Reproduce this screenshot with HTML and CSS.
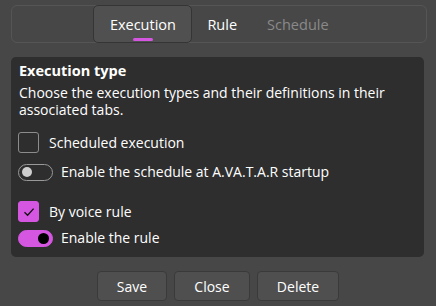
FILE: index.html
```html
<!DOCTYPE html>
<html>
<head>
<meta charset="utf-8">
<link rel="stylesheet" href="styles.css">
</head>
<body>
<div class="tabs">
  <div class="tab selected">Execution<span class="indicator"></span></div>
  <div class="tab">Rule</div>
  <div class="tab disabled">Schedule</div>
</div>
<div class="panel">
  <div class="title">Execution type</div>
  <div class="desc">Choose the execution types and their definitions in their associated tabs.</div>
  <div class="group">
    <div class="row"><span class="check"></span><span>Scheduled execution</span></div>
    <div class="row tight"><span class="toggle"><span class="knob"></span></span><span>Enable the schedule at A.VA.T.A.R startup</span></div>
  </div>
  <div class="group second">
    <div class="row"><span class="check on"><svg width="14" height="14" viewBox="0 0 14 14"><path d="M2.5 7.2 L5.6 10.2 L11.6 3.6" fill="none" stroke="#111" stroke-width="1.3"/></svg></span><span>By voice rule</span></div>
    <div class="row tight"><span class="toggle on"><span class="knob"></span></span><span>Enable the rule</span></div>
  </div>
</div>
<div class="buttons">
  <button class="btn save">Save</button>
  <button class="btn close">Close</button>
  <button class="btn delete">Delete</button>
</div>
</body>
</html>
```
FILE: styles.css
```css
html, body {
  margin: 0;
  padding: 0;
  background: #474747;
  width: 436px;
  height: 306px;
  overflow: hidden;
}
body {
  font-family: "Open Sans", "Noto Sans", sans-serif;
  color: #ffffff;
  font-size: 14px;
  padding-top: 5px;
  box-sizing: border-box;
}
.tabs {
  margin: 0 9px 0 11px;
  height: 38px;
  border: 1px solid #555555;
  border-radius: 6px;
  box-sizing: border-box;
  display: flex;
  justify-content: center;
  align-items: stretch;
  font-size: 14.5px;
}
.tab {
  position: relative;
  display: flex;
  align-items: center;
  padding: 0 15px;
  margin-top: -1px;
  margin-bottom: -1px;
}
.tab.selected {
  width: 99px;
  box-sizing: border-box;
  justify-content: center;
  background: #505050;
  border: 1px solid #353535;
  border-radius: 5px;
  margin-left: -1px;
}
.tab.disabled {
  color: #8a8a8a;
}
.indicator {
  position: absolute;
  left: 39px;
  bottom: 1px;
  width: 20px;
  height: 3px;
  border-radius: 2px;
  background: #d456e1;
}
.panel {
  margin: 14px 12px 0 11px;
  height: 200px;
  background: #2e2e2e;
  border-radius: 5px;
  padding: 4px 8px 0 8px;
  box-sizing: border-box;
}
.title {
  font-weight: bold;
  font-size: 14.5px;
  line-height: 20px;
}
.desc {
  margin-top: 3px;
  line-height: 17px;
  padding-right: 10px;
}
.group {
  margin-top: 14px;
  display: flex;
  flex-direction: column;
  gap: 9px;
}
.group.second {
  margin-top: 19px;
  gap: 6px;
}
.row {
  display: flex;
  align-items: center;
  gap: 10px;
  line-height: 20px;
}
.row.tight {
  gap: 8px;
}
.check {
  width: 21px;
  height: 21px;
  box-sizing: border-box;
  border: 1px solid #8c8c8c;
  border-radius: 3px;
  margin-left: -1px;
  display: flex;
  align-items: center;
  justify-content: center;
}
.check.on {
  background: #d456e1;
  border-color: #d456e1;
}
.toggle {
  width: 35px;
  height: 17px;
  box-sizing: border-box;
  border: 1px solid #999999;
  border-radius: 9px;
  margin-left: -1px;
  display: flex;
  align-items: center;
  padding: 0 3px;
}
.toggle .knob {
  width: 10px;
  height: 10px;
  border-radius: 50%;
  background: #cfcfcf;
}
.toggle.on {
  background: #d456e1;
  border-color: #d456e1;
  justify-content: flex-end;
}
.toggle.on .knob {
  background: #000;
  width: 11px;
  height: 11px;
}
.buttons {
  display: flex;
  justify-content: center;
  gap: 7px;
  margin-top: 14px;
}
.btn {
  font-family: inherit;
  font-size: 14px;
  color: #ffffff;
  background: #4f4f4f;
  border: 1px solid #3a3a3a;
  border-radius: 4px;
  height: 30px;
  padding: 0;
}
.btn.save { width: 70px; }
.btn.close { width: 76px; }
.btn.delete { width: 82px; }
```
